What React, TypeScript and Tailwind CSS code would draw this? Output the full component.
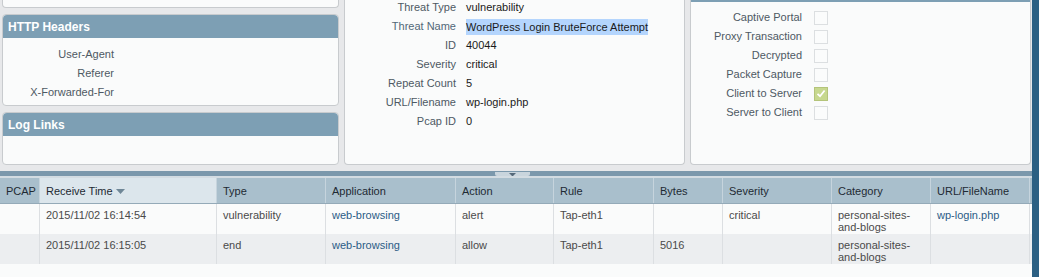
import type { ReactNode } from "react";

const headerRows = ["User-Agent", "Referer", "X-Forwarded-For"];

const threatRows: [string, string][] = [
  ["Threat Type", "vulnerability"],
  ["Threat Name", "WordPress Login BruteForce Attempt"],
  ["ID", "40044"],
  ["Severity", "critical"],
  ["Repeat Count", "5"],
  ["URL/Filename", "wp-login.php"],
  ["Pcap ID", "0"],
];

const flagRows: [string, boolean][] = [
  ["Captive Portal", false],
  ["Proxy Transaction", false],
  ["Decrypted", false],
  ["Packet Capture", false],
  ["Client to Server", true],
  ["Server to Client", false],
];

const columns = [
  "PCAP",
  "Receive Time",
  "Type",
  "Application",
  "Action",
  "Rule",
  "Bytes",
  "Severity",
  "Category",
  "URL/FileName",
];

type LogRow = {
  time: string;
  type: string;
  app: string;
  action: string;
  rule: string;
  bytes: string;
  severity: string;
  category: string;
  url: string;
};

const logs: LogRow[] = [
  {
    time: "2015/11/02 16:14:54",
    type: "vulnerability",
    app: "web-browsing",
    action: "alert",
    rule: "Tap-eth1",
    bytes: "",
    severity: "critical",
    category: "personal-sites-and-blogs",
    url: "wp-login.php",
  },
  {
    time: "2015/11/02 16:15:05",
    type: "end",
    app: "web-browsing",
    action: "allow",
    rule: "Tap-eth1",
    bytes: "5016",
    severity: "",
    category: "personal-sites-and-blogs",
    url: "",
  },
];

const gridCols =
  "grid grid-cols-[40px_177px_109px_130px_98px_100px_69px_109px_99px_99px]";

function PanelHeader({ title }: { title: string }) {
  return (
    <div className="flex h-[23px] items-center rounded-t-[4px] bg-[#7d9fb4] px-[5px] text-[12px] font-bold text-white">
      {title}
    </div>
  );
}

function Label({ children, accent }: { children: ReactNode; accent?: boolean }) {
  return (
    <div
      className={`w-[111px] shrink-0 text-right ${accent ? "text-[#526878]" : "text-[#4e5963]"}`}
    >
      {children}
    </div>
  );
}

function Check({ checked }: { checked: boolean }) {
  if (checked) {
    return (
      <div className="flex h-[14px] w-[14px] items-center justify-center border border-[#b4c47a] bg-[#c7d88e]">
        <svg width="10" height="9" viewBox="0 0 10 9">
          <path d="M1.5 4.8 L4 7.2 L8.6 1.5" fill="none" stroke="#fff" strokeWidth="1.8" />
        </svg>
      </div>
    );
  }
  return <div className="h-[14px] w-[14px] border border-[#dcdfe1] bg-[#fbfcfc]" />;
}

export default function App() {
  return (
    <div className="flex h-[277px] w-[1039px] overflow-hidden bg-[#e7e8ea] font-['Liberation_Sans',Arial,sans-serif] text-[11px]">
      <div className="flex w-[1032px] flex-col">
        {/* detail panels */}
        <div className="flex h-[165px] gap-[5px] pl-[2px]">
          {/* left column */}
          <div className="flex w-[337px] flex-col">
            <div className="h-[8px] rounded-b-[4px] border border-t-0 border-[#c8cbce] bg-[#fafbfb]" />
            <div className="mt-[6px] h-[92px] rounded-[4px] border border-[#c8cbce] bg-[#fafbfb]">
              <PanelHeader title="HTTP Headers" />
              <div className="pt-[7px]">
                {headerRows.map((r) => (
                  <div key={r} className="flex h-[19px] items-center">
                    <Label>{r}</Label>
                  </div>
                ))}
              </div>
            </div>
            <div className="mt-[6px] h-[53px] rounded-[4px] border border-[#c8cbce] bg-[#fafbfb]">
              <PanelHeader title="Log Links" />
            </div>
          </div>

          {/* threat details */}
          <div className="w-[341px] overflow-hidden rounded-b-[4px] border border-t-0 border-[#c8cbce] bg-[#fafbfb]">
            <div className="-mt-[2px]">
              {threatRows.map(([k, v]) => (
                <div key={k} className="flex h-[19px] items-center gap-[10px]">
                  <Label accent={k === "Threat Name"}>{k}</Label>
                  <span
                    className={
                      k === "Threat Name"
                        ? "bg-[#b4d5fd] leading-[16px] text-[#1a1a1a]"
                        : "text-[#1a1a1a]"
                    }
                  >
                    {v}
                  </span>
                </div>
              ))}
            </div>
          </div>

          {/* flags */}
          <div className="w-[341px] overflow-hidden rounded-b-[4px] border border-t-0 border-[#c8cbce] bg-[#fafbfb]">
            <div className="h-[2px] bg-[#7d9fb4]" />
            <div className="pt-[6px]">
              {flagRows.map(([k, c]) => (
                <div key={k} className="flex h-[19px] items-center gap-[12px]">
                  <Label>{k}</Label>
                  <Check checked={c} />
                </div>
              ))}
            </div>
          </div>
        </div>

        {/* splitter */}
        <div className="mt-[6px] flex h-[5px] bg-[#7b98ac]">
          <div className="ml-[495px] mt-[1px] flex h-[4px] w-[35px] justify-center rounded-b-[2px] bg-[#c9d5dd]">
            <svg width="7" height="4" viewBox="0 0 7 4" className="mt-[1px]">
              <path d="M0 0 H7 L3.5 3.5 Z" fill="#55697a" />
            </svg>
          </div>
        </div>
        <div className="h-[2px] bg-[#d3dce2]" />

        {/* log table */}
        <div className="flex-1 bg-[#fafbfb]">
          <div className={`${gridCols} h-[26px] border-b border-[#94aab8] bg-[#a9bfcc] text-[#1e2a33]`}>
            {columns.map((c) => (
              <div
                key={c}
                className={`flex items-center border-r border-[#c6d4dd] px-[6px] pt-[1px] ${
                  c === "Receive Time" ? "bg-[#dce6ec]" : ""
                }`}
              >
                {c}
                {c === "Receive Time" && (
                  <svg width="9" height="5" viewBox="0 0 9 5" className="ml-[3px] mt-[1px]">
                    <path d="M0 0 H9 L4.5 5 Z" fill="#6f8797" />
                  </svg>
                )}
              </div>
            ))}
          </div>
          {logs.map((r, i) => (
            <div
              key={r.time}
              className={`${gridCols} h-[30px] leading-[12px] text-[#4a4a4a] ${
                i % 2 ? "bg-[#eceef0]" : "bg-[#fafbfb]"
              }`}
            >
              {[
                "",
                r.time,
                r.type,
                r.app,
                r.action,
                r.rule,
                r.bytes,
                r.severity,
                r.category,
                r.url,
              ].map((v, j) => (
                <div
                  key={j}
                  className={`border-r border-[#dcdfe2] px-[6px] pt-[5px] ${
                    j === 3 || j === 9 ? "text-[#2b5c86]" : ""
                  }`}
                >
                  {v}
                </div>
              ))}
            </div>
          ))}
        </div>
      </div>
      <div className="flex-1 bg-[#2c6083]" />
    </div>
  );
}
